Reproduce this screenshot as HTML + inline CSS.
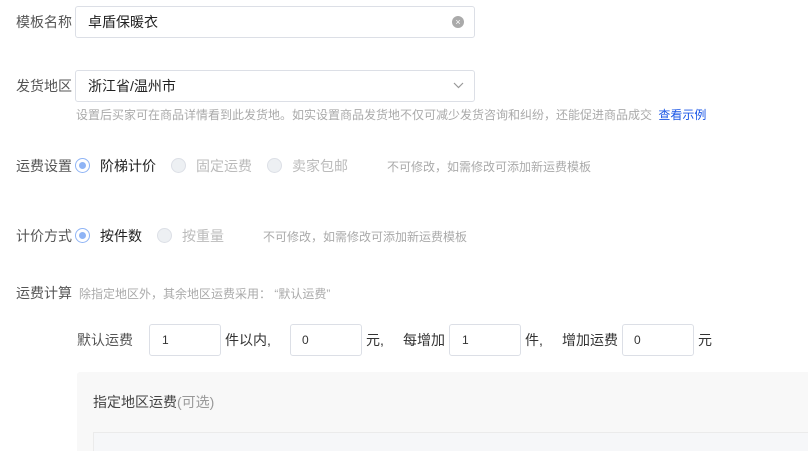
<!DOCTYPE html>
<html><head><meta charset="utf-8"><style>
*{margin:0;padding:0;box-sizing:border-box}
body{width:808px;height:451px;overflow:hidden;background:#fff;font-family:"Liberation Sans","Noto Sans CJK SC",sans-serif;font-size:14px;color:#333;position:relative}
.a{position:absolute;white-space:nowrap;line-height:16px}
.lbl{color:#555}
.inp{position:absolute;border:1px solid #dcdfe6;border-radius:3px;background:#fff}
.g{color:#aaa;font-size:12px}
.r{position:absolute;width:15px;height:15px;border-radius:50%;border:1px solid #dcdfe6;background:#edf0f3}
.r.on{border:1px solid #8fb4f5;background:#fff}
.r.on::after{content:"";position:absolute;left:3px;top:3px;width:7px;height:7px;border-radius:50%;background:#8fb4f5}
.d{color:#bbb}
</style></head><body>
<div class="a lbl" style="left:16px;top:14px">模板名称</div>
<div class="inp" style="left:75px;top:6px;width:400px;height:32px"></div>
<div class="a" style="left:88px;top:14px;color:#222">卓盾保暖衣</div>
<div style="position:absolute;left:452px;top:16px;width:12px;height:12px;border-radius:50%;background:#aaa;color:#fff;font-size:9px;line-height:12px;text-align:center">×</div>

<div class="a lbl" style="left:16px;top:78px">发货地区</div>
<div class="inp" style="left:75px;top:70px;width:400px;height:32px"></div>
<div class="a" style="left:88px;top:78px;color:#222">浙江省/温州市</div>
<svg style="position:absolute;left:453px;top:82px" width="11" height="7" viewBox="0 0 11 7"><path d="M1 1l4.5 4.5L10 1" fill="none" stroke="#999" stroke-width="1.2"/></svg>
<div class="a g" style="left:76px;top:107px">设置后买家可在商品详情看到此发货地。如实设置商品发货地不仅可减少发货咨询和纠纷，还能促进商品成交 <span style="color:#1a56e6;margin-left:3px">查看示例</span></div>

<div class="a lbl" style="left:16px;top:158px">运费设置</div>
<div class="r on" style="left:75px;top:158px"></div>
<div class="a" style="left:100px;top:158px;color:#222">阶梯计价</div>
<div class="r" style="left:171px;top:158px"></div>
<div class="a d" style="left:196px;top:158px">固定运费</div>
<div class="r" style="left:267px;top:158px"></div>
<div class="a d" style="left:292px;top:158px">卖家包邮</div>
<div class="a g" style="left:387px;top:159px">不可修改，如需修改可添加新运费模板</div>

<div class="a lbl" style="left:16px;top:228px">计价方式</div>
<div class="r on" style="left:75px;top:228px"></div>
<div class="a" style="left:100px;top:228px;color:#222">按件数</div>
<div class="r" style="left:157px;top:228px"></div>
<div class="a d" style="left:182px;top:228px">按重量</div>
<div class="a g" style="left:263px;top:229px">不可修改，如需修改可添加新运费模板</div>

<div class="a lbl" style="left:16px;top:285px">运费计算</div>
<div class="a g" style="left:79px;top:286px">除指定地区外，其余地区运费采用： “默认运费”</div>

<div class="a lbl" style="left:77px;top:332px">默认运费</div>
<div class="inp" style="left:149px;top:324px;width:72px;height:32px"></div>
<div class="a" style="left:162px;top:332px;font-size:12px">1</div>
<div class="a" style="left:225px;top:332px">件以内,</div>
<div class="inp" style="left:290px;top:324px;width:72px;height:32px"></div>
<div class="a" style="left:302px;top:332px;font-size:12px">0</div>
<div class="a" style="left:366px;top:332px">元,</div>
<div class="a" style="left:403px;top:332px">每增加</div>
<div class="inp" style="left:449px;top:324px;width:72px;height:32px"></div>
<div class="a" style="left:462px;top:332px;font-size:12px">1</div>
<div class="a" style="left:525px;top:332px">件,</div>
<div class="a" style="left:562px;top:332px">增加运费</div>
<div class="inp" style="left:622px;top:324px;width:72px;height:32px"></div>
<div class="a" style="left:634px;top:332px;font-size:12px">0</div>
<div class="a" style="left:698px;top:332px">元</div>

<div style="position:absolute;left:77px;top:372px;width:731px;height:79px;background:#f8f8f8;border-radius:3px 0 0 0"></div>
<div class="a" style="left:93px;top:394px;color:#444">指定地区运费<span style="color:#999">(可选)</span></div>
<div style="position:absolute;left:93px;top:432px;width:715px;height:19px;background:#f6f7f9;border-top:1px solid #ebebeb;border-left:1px solid #ebebeb"></div>
</body></html>
